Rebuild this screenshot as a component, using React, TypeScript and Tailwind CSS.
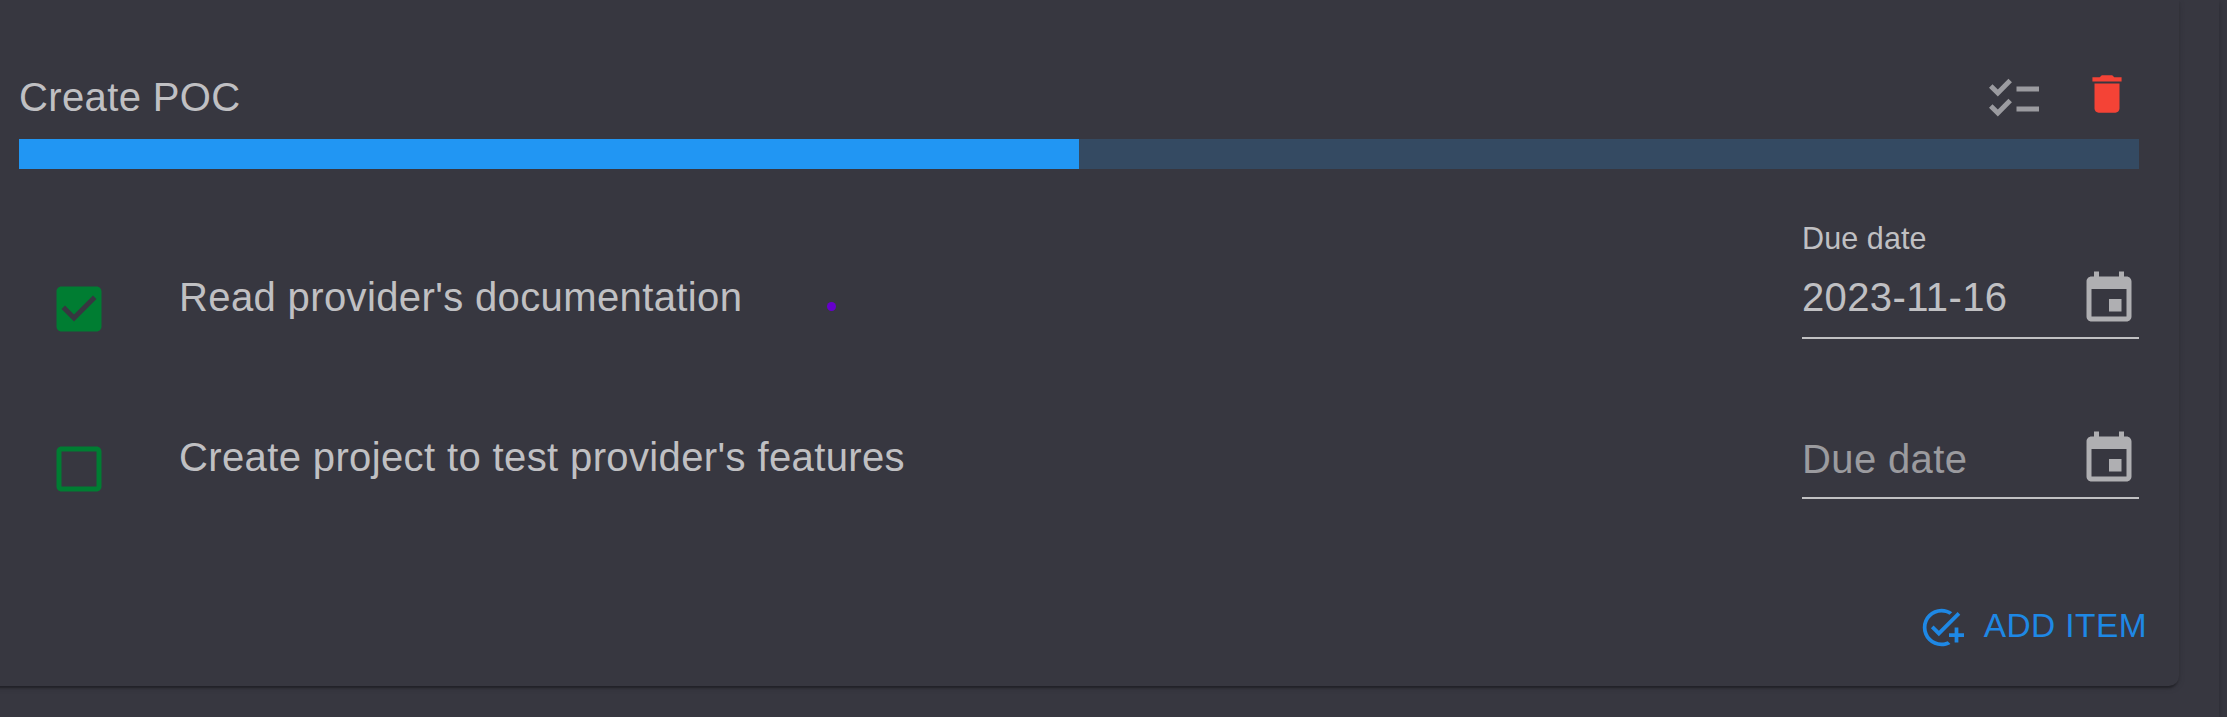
import React from "react";

function Icon({ d, className }: { d: string; className: string }) {
  return (
    <svg viewBox="0 0 24 24" fill="currentColor" className={className} aria-hidden="true">
      <path d={d} />
    </svg>
  );
}

const icons = {
  checklist:
    "M22 7h-9v2h9V7zm0 8h-9v2h9v-2zM5.54 11L2 7.46l1.41-1.41 2.12 2.12 4.24-4.24 1.41 1.41L5.54 11zm0 8L2 15.46l1.41-1.41 2.12 2.12 4.24-4.24 1.41 1.41L5.54 19z",
  trash: "M6 19c0 1.1.9 2 2 2h8c1.1 0 2-.9 2-2V7H6v12zM19 4h-3.5l-1-1h-5l-1 1H5v2h14V4z",
  checked:
    "M19 3H5c-1.11 0-2 .9-2 2v14c0 1.1.89 2 2 2h14c1.11 0 2-.9 2-2V5c0-1.1-.89-2-2-2zm-9 14l-5-5 1.41-1.41L10 14.17l7.59-7.59L19 8l-9 9z",
  unchecked:
    "M19 5v14H5V5h14m0-2H5c-1.1 0-2 .9-2 2v14c0 1.1.9 2 2 2h14c1.1 0 2-.9 2-2V5c0-1.1-.9-2-2-2z",
  event:
    "M17 12h-5v5h5v-5zM16 1v2H8V1H6v2H5c-1.11 0-1.99.9-1.99 2L3 19c0 1.1.89 2 2 2h14c1.1 0 2-.9 2-2V5c0-1.1-.9-2-2-2h-1V1h-2zm3 18H5V8h14v11z",
  addTask:
    "M22 5.18L10.59 16.6l-4.24-4.24 1.41-1.41 2.83 2.83 10-10L22 5.18zM12 20c-4.42 0-8-3.58-8-8s3.58-8 8-8c1.57 0 3.04.46 4.28 1.25l1.45-1.45C16.1 2.67 14.13 2 12 2 6.48 2 2 6.48 2 12s4.48 10 10 10c1.73 0 3.36-.44 4.78-1.22l-1.5-1.5c-1 .46-2.11.72-3.28.72zm7-5h-3v2h3v3h2v-3h3v-2h-3v-3h-2v3z",
};

function TaskRow({ title, date, done }: { title: string; date?: string; done?: boolean }) {
  return (
    <div className="flex h-40 items-start">
      <button className="ml-[30px] mt-[70px] text-[#007d32]">
        <Icon d={done ? icons.checked : icons.unchecked} className="size-[60px]" />
      </button>
      <span className="ml-[70px] mt-[58px] whitespace-nowrap leading-[60px]">{title}</span>
      <div className="ml-auto flex h-[130px] w-[337px] flex-col border-b-2 border-[#c1c1c3]">
        <span className="h-[51px] pt-[9px] text-[30.5px] leading-10 tracking-[0.1px]">
          {date ? "Due date" : ""}
        </span>
        <div className="flex items-start justify-between">
          {date ? (
            <span className="pt-[7px] leading-[60px]">{date}</span>
          ) : (
            <span className="pt-[9px] leading-[60px] text-white/50">Due date</span>
          )}
          <Icon d={icons.event} className="mt-[9px] size-[60px] text-white/60" />
        </div>
      </div>
    </div>
  );
}

export default function App() {
  return (
    <div className="h-[717px] w-[2227px] overflow-hidden bg-[#373740] font-['Liberation_Sans',Arial,sans-serif] text-[40px] tracking-[0.00938em] text-white/70">
      <div className="h-full w-[2219px] shadow-[0_2px_6px_rgba(0,0,0,0.25)]">
        <section className="relative -ml-5 h-[686px] w-[2199px] rounded-br-[10px] pl-[39px] pr-10 shadow-[0_5px_2px_-3px_rgba(0,0,0,0.2),0_2px_2px_rgba(0,0,0,0.14),0_2px_7px_rgba(0,0,0,0.12)]">
          <header className="flex h-[139px] items-start pt-[67px]">
            <h1 className="leading-[60px]">Create POC</h1>
            <button className="ml-auto mt-[2px] text-white/50">
              <Icon d={icons.checklist} className="size-[60px]" />
            </button>
            <button className="ml-[38px] mr-[7px] mt-[2px] text-[#f44336]">
              <Icon d={icons.trash} className="size-[50px]" />
            </button>
          </header>
          <div className="h-[30px] bg-[#344a62]">
            <div className="h-full w-1/2 bg-[#2196f3]" />
          </div>
          <div className="pt-10">
            <TaskRow title="Read provider's documentation" date="2023-11-16" done />
            <TaskRow title="Create project to test provider's features" />
          </div>
          <div className="flex justify-end pt-[67px]">
            <button className="-mr-[8px] flex items-start gap-5 text-[33.5px] leading-[60px] tracking-[0.4px] text-[#1e88e5]">
              <Icon d={icons.addTask} className="mt-[9px] size-[45px]" />
              ADD ITEM
            </button>
          </div>
          <span className="absolute left-[847px] top-[302px] size-[9px] rounded-full bg-[#6600cc]" />
        </section>
      </div>
    </div>
  );
}
